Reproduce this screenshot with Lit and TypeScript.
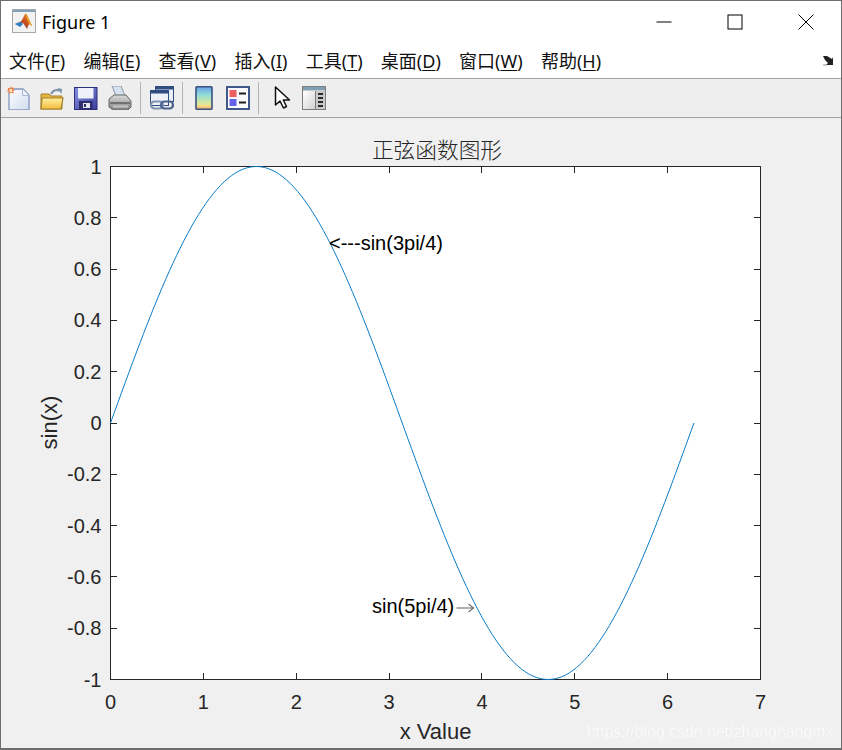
import { LitElement, html, css, svg } from "lit";
import { customElement } from "lit/decorators.js";

const MENUS: [string, string][] = [
  ["文件", "F"], ["编辑", "E"], ["查看", "V"], ["插入", "I"],
  ["工具", "T"], ["桌面", "D"], ["窗口", "W"], ["帮助", "H"],
];

const X0 = 110.5, XS = 92.86, Y0 = 423, YS = 256.5;
const px = (x: number) => X0 + x * XS;
const py = (y: number) => Y0 - y * YS;
const curve = Array.from({ length: 160 }, (_, i) => {
  const x = (i / 159) * 2 * Math.PI;
  return `${px(x).toFixed(2)},${py(Math.sin(x)).toFixed(2)}`;
}).join(" ");

const XT = [0, 1, 2, 3, 4, 5, 6, 7];
const YT = ["1", "0.8", "0.6", "0.4", "0.2", "0", "-0.2", "-0.4", "-0.6", "-0.8", "-1"];

@customElement("app-root")
export class AppRoot extends LitElement {
  static styles = css`
    :host { display: block; width: 842px; height: 750px; overflow: hidden; }
    .win {
      width: 842px; height: 750px; box-sizing: border-box;
      border: 1px solid #6e6e6e; border-bottom-width: 2px;
      display: flex; flex-direction: column; background: #f0f0f0;
    }
    .titlebar {
      height: 41px; background: #fff; display: flex; align-items: center;
      padding-left: 11px; gap: 5px; flex: none;
    }
    .title { font: 18px "Noto Sans", "Open Sans", sans-serif; color: #000; flex: 1; padding-top: 1px; }
    .wbtns { display: flex; height: 100%; }
    .wbtn { width: 71px; display: flex; align-items: center; justify-content: center; }
    .menubar {
      height: 37px; background: #fff; display: flex; align-items: center; flex: none;
      padding-left: 8px; box-sizing: border-box; border-bottom: 1px solid #a3a3a3;
      font: 18px "Noto Sans", "Noto Sans CJK SC", sans-serif; color: #111;
    }
    .menu { margin-right: 18.3px; white-space: nowrap; }
    .menu u { text-underline-offset: 2px; text-decoration-thickness: 1px; }
    .spacer { flex: 1; }
    .corner { margin-right: 6px; margin-top: 1px; }
    .toolbar {
      height: 39px; background: #eeeeee; display: flex; align-items: center; flex: none;
      box-sizing: border-box; border-bottom: 1px solid #a3a3a3; padding: 0 0 1px 0;
    }
    .tb { width: 34px; height: 24px; display: flex; justify-content: center; flex: none; }
    .tb.narrow { width: 32px; }
    .sep { width: 1px; height: 32px; background: #b4b4b4; margin: 0 4px 0 3px; flex: none; }
    .sep.wide { margin: 0 7px 0 3px; }
    .figure { flex: 1; min-height: 0; position: relative; background: #f0f0f0; }
    .figure svg { display: block; }
    .tick { font: 20px "Liberation Sans", Arial, sans-serif; fill: #262626; }
    .label { font: 22px "Liberation Sans", Arial, sans-serif; fill: #262626; }
    .ttl { font: 300 21.7px "Noto Sans CJK SC", sans-serif; fill: #262626; }
    .note { font: 20px "Liberation Sans", Arial, sans-serif; fill: #000; }
    .mark {
      font: 15.9px "Liberation Sans", Arial, sans-serif; fill: #fbfbfb;
      filter: drop-shadow(0 0 0.5px #e0e0e0);
    }
  `;

  icons = {
    logo: svg`<svg width="25" height="25" viewBox="0 0 25 25">
      <defs><linearGradient id="lg" x1="0" y1="1" x2="1" y2="0"><stop offset="0" stop-color="#2c7fd0"/><stop offset=".5" stop-color="#c84a1e"/><stop offset="1" stop-color="#f09a20"/></linearGradient></defs>
      <rect x=".5" y=".5" width="23" height="23" fill="#f2f2f2" stroke="#a8a8a8"/>
      <rect x="1" y="1" width="22" height="2" fill="#7fa0bc"/>
      <path d="M3 15l5-2 2-2 3-6c1-1 2 0 3 3l4 9-3-2-2 5-4-6-3 2z" fill="url(#lg)"/>
      <path d="M3 15l5-2 3 2-3 3z" fill="#2f7fc4"/>
      <path d="M13 5l3 3 4 9-3-2z" fill="#e8a02a"/>
    </svg>`,
    newdoc: svg`<svg width="24" height="24" viewBox="0 0 24 24">
      <defs><linearGradient id="nd" x1="0" y1="0" x2="1" y2="1"><stop offset="0" stop-color="#fff"/><stop offset="1" stop-color="#cfdcf0"/></linearGradient></defs>
      <path d="M3 3h14l6 6v15H3z" fill="url(#nd)" stroke="#8497bd" stroke-width="1.300"/>
      <path d="M16.500 3v6.500h6.500" fill="#eef3fa" stroke="#a9b8d4"/>
      <path d="M5 0l1 2 2-1-1 2 2 1.500-2 .5 1 2.500-3-1-2 2 .2-3L0 5l2.500-1L1.500 1.500 4 2.500z" fill="#ee7f3a"/>
      <circle cx="4.800" cy="4.500" r="1.700" fill="#ffd9b0"/>
    </svg>`,
    open: svg`<svg width="24" height="24" viewBox="0 0 24 24">
      <defs><linearGradient id="op" x1="0" y1="0" x2="0" y2="1"><stop offset="0" stop-color="#fff0a0"/><stop offset="1" stop-color="#f4bd3e"/></linearGradient></defs>
      <path d="M1 8h8l2 2h11v13H1z" fill="#e8b63c" stroke="#a3802c"/>
      <path d="M1 23l1-11h21l-2 11z" fill="url(#op)" stroke="#a3802c" stroke-width="1.200"/>
      <path d="M11 8c2-4 6-5 9-3" fill="none" stroke="#7d92a8" stroke-width="2"/>
      <path d="M17.500 2l4.500 1-.5 5z" fill="#7d92a8"/>
    </svg>`,
    save: svg`<svg width="24" height="24" viewBox="0 0 24 24">
      <defs><linearGradient id="sv" x1="0" y1="0" x2="1" y2="1"><stop offset="0" stop-color="#8a92e4"/><stop offset="1" stop-color="#3a3f9c"/></linearGradient></defs>
      <rect x=".5" y="1.500" width="22.500" height="22" fill="url(#sv)" stroke="#2d2f78"/>
      <rect x="4" y="2" width="15.500" height="10.500" fill="#eef0fa"/>
      <rect x="5" y="15" width="13.500" height="8.500" fill="#2c2e6e"/>
      <rect x="9" y="17" width="7" height="5" fill="#e8e8f0"/>
      <rect x="10" y="18" width="2" height="3" fill="#2c2e6e"/>
    </svg>`,
    print: svg`<svg width="24" height="24" viewBox="0 0 24 24">
      <defs><linearGradient id="pr" x1="0" y1="0" x2="0" y2="1"><stop offset="0" stop-color="#dcdcdc"/><stop offset="1" stop-color="#808080"/></linearGradient></defs>
      <path d="M4 0h9l4 10H8z" fill="#d5e2f2" stroke="#8c96a4"/>
      <path d="M1 13l5-4h12l5 6v6l-3 3H5l-4-3z" fill="url(#pr)" stroke="#666"/>
      <path d="M2 17h20" stroke="#4a4a4a" stroke-width="1.200"/>
      <path d="M5 20.500h15" stroke="#c4c4c4" stroke-width="2"/>
    </svg>`,
    link: svg`<svg width="24" height="24" viewBox="0 0 24 24">
      <rect x="5.500" y=".5" width="18" height="15" fill="#e9eef6" stroke="#2f4d7e"/>
      <rect x="5.500" y=".5" width="18" height="3" fill="#2f4d7e"/>
      <rect x=".5" y="4.500" width="18" height="15" fill="#eef1f7" stroke="#2f4d7e"/>
      <rect x=".5" y="4.500" width="18" height="3" fill="#2f4d7e"/>
      <rect x="1" y="15.500" width="12" height="7" rx="3.500" fill="none" stroke="#7f93b3" stroke-width="2.200"/>
      <rect x="11" y="15.500" width="12" height="7" rx="3.500" fill="none" stroke="#4a6290" stroke-width="2.200"/>
    </svg>`,
    bar: svg`<svg width="24" height="24" viewBox="0 0 24 24">
      <defs><linearGradient id="cb" x1="0" y1="0" x2="0" y2="1"><stop offset="0" stop-color="#6a9fe8"/><stop offset=".35" stop-color="#8fdcd8"/><stop offset=".65" stop-color="#c9e6a8"/><stop offset=".85" stop-color="#f5e08a"/><stop offset="1" stop-color="#f0a070"/></linearGradient></defs>
      <rect x="4" y=".75" width="16" height="22.500" rx="1" fill="url(#cb)" stroke="#3a5380" stroke-width="1.600"/>
    </svg>`,
    legend: svg`<svg width="24" height="24" viewBox="0 0 24 24">
      <rect x="1" y="1" width="22" height="22" fill="#fbfbfd" stroke="#3f5888" stroke-width="2"/>
      <rect x="3.500" y="4" width="7" height="7" fill="#ef5f5f"/>
      <rect x="3.500" y="13" width="7" height="7" fill="#6464e8"/>
      <path d="M13 7.500h7M13 16.500h7" stroke="#1c1c1c" stroke-width="1.800"/>
    </svg>`,
    cursor: svg`<svg width="24" height="24" viewBox="0 0 24 24">
      <path d="M5.500 1v18l4.500-4 3.500 7 3-1.500-3.200-6.500h6.200z" fill="#fff" stroke="#111" stroke-width="1.500" stroke-linejoin="round"/>
    </svg>`,
    panel: svg`<svg width="24" height="24" viewBox="0 0 24 24">
      <defs><linearGradient id="pn" x1="0" y1="0" x2="1" y2="1"><stop offset="0" stop-color="#fff"/><stop offset="1" stop-color="#d2d2d2"/></linearGradient></defs>
      <rect x=".5" y=".5" width="23" height="23" fill="#c9c9c9" stroke="#7d7d7d"/>
      <rect x="1" y="1" width="22" height="3" fill="#7fa0b4"/>
      <rect x="1" y="5" width="12" height="18" fill="url(#pn)"/>
      <path d="M13.500 5v18" stroke="#7d7d7d"/>
      <path d="M16 8h5M16 12h5M16 16h5M16 20h5" stroke="#2a2a2a" stroke-width="2"/>
    </svg>`,
  };

  plot() {
    return svg`<svg width="840" height="630" viewBox="1 118 840 630">
      <rect x="${X0}" y="166.500" width="650" height="513" fill="#fff" stroke="#262626"/>
      ${XT.slice(1, -1).map((t) => svg`
        <path d="M${Math.floor(px(t)) + 0.5} 679.500v-6.500M${Math.floor(px(t)) + 0.5} 166.500v6.500" stroke="#262626" fill="none"/>`)}
      ${XT.map((t) => svg`<text class="tick" x="${px(t)}" y="708.500" text-anchor="middle">${t}</text>`)}
      ${YT.map((t, i) => {
        const y = 166.5 + i * 51.3;
        const edge = i === 0 || i === YT.length - 1;
        return svg`
        ${edge ? "" : svg`<path d="M110.500 ${Math.floor(y) + 0.5}h6.500M760.500 ${Math.floor(y) + 0.5}h-6.500" stroke="#262626" fill="none"/>`}
        <text class="tick" x="101.500" y="${y + 7}" text-anchor="end">${t}</text>`;
      })}
      <polyline points="${curve}" fill="none" stroke="#0a7cc6" stroke-width="1"/>
      <text class="ttl" x="437" y="158" text-anchor="middle">正弦函数图形</text>
      <text class="label" x="435.500" y="738.500" text-anchor="middle">x Value</text>
      <text class="label" transform="translate(57 422.500) rotate(-90)" text-anchor="middle">sin(x)</text>
      <text class="note" x="329" y="249.500">&lt;---sin(3pi/4)</text>
      <text class="note" x="372" y="613">sin(5pi/4)</text>
      <path d="M456.500 608h17" fill="none" stroke="#939393" stroke-width="1.500"/>
      <path d="M468.500 604l5 4-5 4" fill="none" stroke="#666" stroke-width="1.100"/>
      <text class="mark" x="587" y="737">https://blog.csdn.net/zhanghanqmx</text>
    </svg>`;
  }

  render() {
    const i = this.icons;
    return html`
      <div class="win">
        <div class="titlebar">
          ${i.logo}
          <div class="title">Figure 1</div>
          <div class="wbtns">
            <div class="wbtn"><svg width="16" height="16" viewBox="0 0 16 16"><path d="M.5 8h15" stroke="#000" fill="none"/></svg></div>
            <div class="wbtn"><svg width="16" height="16" viewBox="0 0 16 16"><rect x="1" y="1" width="14" height="14" fill="none" stroke="#000"/></svg></div>
            <div class="wbtn"><svg width="16" height="16" viewBox="0 0 16 16"><path d="M.5.500l15 15M15.500.500l-15 15" stroke="#000" fill="none"/></svg></div>
          </div>
        </div>
        <div class="menubar">
          ${MENUS.map(([n, k]) => html`<span class="menu">${n}(<u>${k}</u>)</span>`)}
          <div class="spacer"></div>
          <svg class="corner" width="12" height="10" viewBox="0 0 12 10"><path d="M0 0l4 0 5 3 1-2v8H3l2-2-3-3z" fill="#222"/><path d="M0 9h4" stroke="#999"/></svg>
        </div>
        <div class="toolbar">
          <div class="tb">${i.newdoc}</div>
          <div class="tb">${i.open}</div>
          <div class="tb">${i.save}</div>
          <div class="tb">${i.print}</div>
          <div class="sep"></div>
          <div class="tb">${i.link}</div>
          <div class="sep"></div>
          <div class="tb">${i.bar}</div>
          <div class="tb">${i.legend}</div>
          <div class="sep wide"></div>
          <div class="tb narrow">${i.cursor}</div>
          <div class="tb narrow">${i.panel}</div>
        </div>
        <div class="figure">${this.plot()}</div>
      </div>
    `;
  }
}
